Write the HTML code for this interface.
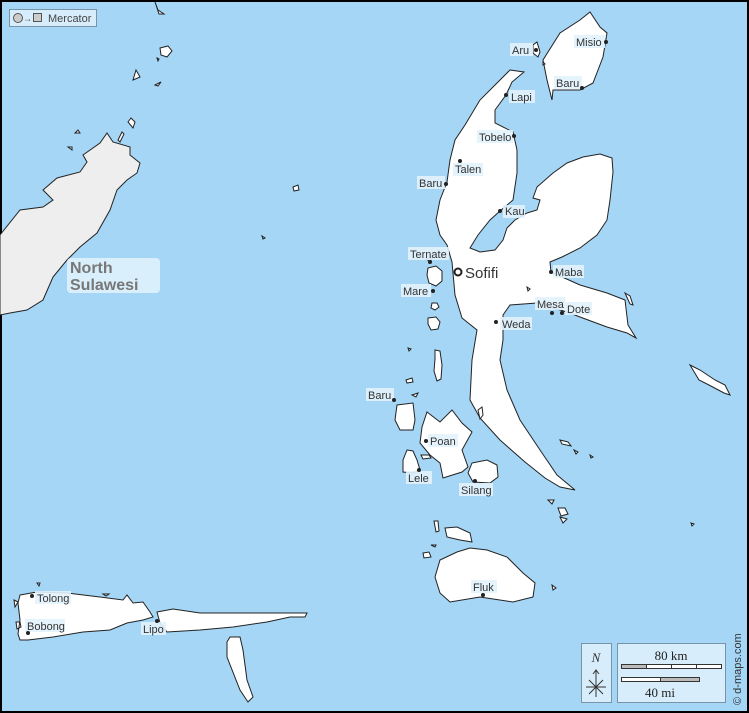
<!DOCTYPE html>
<html><head><meta charset="utf-8"><style>
html,body{margin:0;padding:0;background:#000}
svg{display:block}
.l{font-family:"Liberation Sans",sans-serif;font-size:11px;fill:#333}
.b{fill:#e2f2fc;opacity:.9}
.land{fill:#fff;stroke:#222;stroke-width:1}
</style></head><body>
<svg width="749" height="713" viewBox="0 0 749 713" xmlns="http://www.w3.org/2000/svg">
<rect x="0" y="0" width="749" height="713" fill="#000"/>
<rect x="2" y="2" width="745" height="709" fill="#a5d6f6"/>
<!-- Sulawesi -->
<path fill="#eee" stroke="#222" stroke-width="1" d="M0,235 L20,210 43,207 53,200 43,190 57,178 80,172 87,162 83,155 100,143 107,133 113,142 130,147 130,155 140,163 137,173 127,180 117,190 110,210 97,233 80,247 67,260 53,277 43,300 27,310 10,313 0,315Z"/>
<path class="land" d="M133,80 L140,77 136,70Z M118,140 l4,-8 2,2 -4,8z M128,122 l3,-4 4,4 -2,6z M75,133 l3,-3 2,3z M68,147 l4,0 0,3z M155,2 l3,8 6,4 -5,0z M160,48 l8,-2 4,5 -5,6 -6,-2z M157,58 l2,1 -1,2z M155,85 l6,-3 -3,4z M293,187 l5,-2 1,5 -5,1z M262,236 l3,2 -2,1z"/>
<!-- Halmahera -->
<path class="land" d="M510,70 L524,72 512,82 506,95 495,110 495,123 513,132 517,150 517,173 513,200 500,211 490,220 478,235 470,248 480,252 495,250 503,240 507,228 515,220 527,213 537,210 540,200 533,198 537,187 553,173 567,163 583,157 600,154 612,158 613,172 610,200 607,220 597,235 580,248 562,257 550,262 551,272 580,285 607,293 625,300 628,325 636,338 627,333 607,327 580,317 567,312 537,303 510,305 503,315 503,340 500,360 507,390 520,420 540,450 557,475 575,490 560,487 545,478 525,462 500,440 480,418 470,400 472,360 477,330 462,318 455,295 452,262 447,245 440,235 436,220 440,200 447,182 450,160 455,140 465,125 480,100Z"/>
<!-- Morotai -->
<path class="land" d="M590,12 L600,27 607,33 603,57 593,83 580,90 553,90 552,100 547,80 543,60 560,33 580,20Z"/>
<path class="land" d="M533,45 l4,-3 3,10 -2,5 -5,-4z M543,62 l2,2 -2,1z"/>
<!-- Ternate group -->
<path class="land" d="M428,268 l8,-2 6,5 0,10 -6,5 -7,-3 -2,-8z M426,259 l5,-1 0,4z M432,303 l5,0 2,4 -4,3 -4,-2z M428,318 l8,-1 4,5 -2,7 -7,1 -3,-6z M435,350 l5,1 2,14 -1,14 -4,2 -3,-10 1,-12z M408,348 l3,1 -2,2z M406,380 l6,-2 1,4 -6,1z M412,395 l6,-2 -2,4z M403,410 l4,-3 3,2 -2,6 -5,2z M527,287 l3,2 -2,2z M625,293 l5,3 3,9 -3,-1z M690,365 l10,5 15,10 10,5 5,10 -6,-2 -15,-8 -10,-5z M560,440 l8,2 3,4 -9,-2z M574,450 l4,2 -2,2z M590,455 l3,2 -2,1z M548,500 l6,0 -2,4z M558,508 l7,0 3,6 -7,2z M560,517 l7,2 -4,4z M691,523 l3,1 -2,2z"/>
<!-- Bacan -->
<path class="land" d="M397,405 L413,403 415,420 413,430 400,430 395,420Z M427,412 L440,422 452,410 462,423 472,432 462,450 468,467 462,472 443,478 440,463 430,455 420,443 422,427Z M472,463 L487,460 497,465 498,477 490,483 473,482 468,473Z M407,450 L413,451 417,460 420,470 413,473 403,472 403,460Z M421,455 l8,0 2,3 -8,1z M478,410 l4,-3 1,8 -3,4z"/>
<!-- Obi -->
<path class="land" d="M457,552 L470,548 487,550 507,557 523,573 535,583 533,597 513,602 480,597 450,602 440,593 435,577 440,560Z M445,528 L457,527 470,533 472,542 460,540 447,537Z M434,521 l4,0 1,10 -3,1z M423,553 l6,-1 2,5 -7,1z M431,545 l5,0 -1,2z M552,585 l4,3 -3,2z"/>
<!-- Sula -->
<path class="land" d="M20,595 L37,592 67,593 100,597 123,600 127,595 133,603 143,602 150,612 153,617 143,620 127,623 110,630 83,632 53,637 28,640 20,640 18,634 20,620 18,603Z M157,612 L173,609 200,613 233,613 287,613 307,613 305,617 290,617 267,622 233,627 200,630 167,632 160,623Z M230,637 L240,637 243,650 247,680 253,697 248,702 240,690 227,657 227,642Z M14,600 l4,2 -3,5z M16,622 l4,0 1,5 -4,2z M37,583 l3,0 -1,3z M103,594 l6,0 -3,2z"/>
<!-- Mercator box -->
<rect x="9.5" y="9.5" width="87" height="17" fill="#d7edfb" stroke="#7894a8"/>
<circle cx="18" cy="18" r="4.5" fill="#ccc" stroke="#555"/>
<text x="23" y="21.5" font-family="Liberation Sans,sans-serif" font-size="9" fill="#555">→</text>
<rect x="33.5" y="13.5" width="8" height="8" fill="#ccc" stroke="#555"/>
<text x="48" y="22" font-family="Liberation Sans,sans-serif" font-size="11" fill="#444">Mercator</text>
<!-- North Sulawesi label -->
<rect x="67" y="258" width="93" height="35" rx="4" fill="#e2f3fd" opacity=".85"/>
<text x="70" y="273" font-family="Liberation Sans,sans-serif" font-size="16" font-weight="bold" fill="#777">North</text>
<text x="70" y="290" font-family="Liberation Sans,sans-serif" font-size="16" font-weight="bold" fill="#777">Sulawesi</text>
<!-- labels -->
<g>
<rect class="b" x="510" y="43" width="23" height="13"/><text class="l" x="512" y="54">Aru</text>
<rect class="b" x="574" y="35" width="31" height="13"/><text class="l" x="576" y="46">Misio</text>
<rect class="b" x="554" y="76" width="28" height="13"/><text class="l" x="556" y="87">Baru</text>
<rect class="b" x="509" y="90" width="26" height="13"/><text class="l" x="511" y="101">Lapi</text>
<rect class="b" x="477" y="130" width="36" height="13"/><text class="l" x="479" y="141">Tobelo</text>
<rect class="b" x="453" y="163" width="30" height="13"/><text class="l" x="455" y="173">Talen</text>
<rect class="b" x="417" y="176" width="28" height="13"/><text class="l" x="419" y="187">Baru</text>
<rect class="b" x="503" y="205" width="22" height="13"/><text class="l" x="505" y="215">Kau</text>
<rect class="b" x="408" y="247" width="41" height="13"/><text class="l" x="410" y="258">Ternate</text>
<rect class="b" x="553" y="265" width="31" height="13"/><text class="l" x="555" y="276">Maba</text>
<rect class="b" x="401" y="284" width="30" height="13"/><text class="l" x="403" y="295">Mare</text>
<rect class="b" x="535" y="297" width="30" height="13"/><text class="l" x="537" y="308">Mesa</text>
<rect class="b" x="565" y="302" width="27" height="13"/><text class="l" x="567" y="313">Dote</text>
<rect class="b" x="500" y="317" width="32" height="13"/><text class="l" x="502" y="328">Weda</text>
<rect class="b" x="366" y="388" width="28" height="13"/><text class="l" x="368" y="399">Baru</text>
<rect class="b" x="428" y="434" width="30" height="13"/><text class="l" x="430" y="445">Poan</text>
<rect class="b" x="406" y="471" width="26" height="13"/><text class="l" x="408" y="482">Lele</text>
<rect class="b" x="459" y="483" width="34" height="13"/><text class="l" x="461" y="494">Silang</text>
<rect class="b" x="471" y="580" width="26" height="13"/><text class="l" x="473" y="591">Fluk</text>
<rect class="b" x="35" y="591" width="36" height="13"/><text class="l" x="37" y="602">Tolong</text>
<rect class="b" x="25" y="619" width="40" height="13"/><text class="l" x="27" y="630">Bobong</text>
<rect class="b" x="141" y="622" width="25" height="13"/><text class="l" x="143" y="633">Lipo</text>
</g>
<g fill="#222">
<circle cx="536" cy="50" r="2"/><circle cx="606" cy="42" r="2"/><circle cx="582" cy="88" r="2"/><circle cx="506" cy="95" r="2"/>
<circle cx="514" cy="136" r="2"/><circle cx="460" cy="161" r="2"/><circle cx="446" cy="184" r="2"/><circle cx="500" cy="211" r="2"/>
<circle cx="430" cy="262" r="2"/><circle cx="551" cy="272" r="2"/><circle cx="433" cy="291" r="2"/><circle cx="552" cy="313" r="2"/>
<circle cx="562" cy="313" r="2"/><circle cx="496" cy="322" r="2"/><circle cx="394" cy="400" r="2"/><circle cx="426" cy="441" r="2"/>
<circle cx="419" cy="470" r="2"/><circle cx="475" cy="481" r="2"/><circle cx="483" cy="595" r="2"/><circle cx="32" cy="596" r="2"/>
<circle cx="28" cy="633" r="2"/><circle cx="157" cy="621" r="2"/>
</g>
<circle cx="458" cy="272" r="3.5" fill="#fff" stroke="#222" stroke-width="2"/>
<text x="465" y="278" font-family="Liberation Sans,sans-serif" font-size="15" fill="#333">Sofifi</text>
<!-- compass/scale -->
<rect x="581.5" y="643.5" width="30" height="59" fill="#d7edfb" stroke="#7894a8"/>
<text x="596" y="662" text-anchor="middle" font-family="Liberation Serif,serif" font-style="italic" font-size="13" fill="#333">N</text>
<path d="M596,670 V697 M586,687 H606 M589,680 L603,694 M603,680 L589,694 M593,674 L596,670 599,674" stroke="#333" fill="none" stroke-width="1"/>
<rect x="617.5" y="643.5" width="108" height="59" fill="#d7edfb" stroke="#7894a8"/>
<text x="671" y="660" text-anchor="middle" font-family="Liberation Serif,serif" font-size="13" fill="#222">80 km</text>
<rect x="621.5" y="664.5" width="100" height="4" fill="#fff" stroke="#333"/>
<rect x="621.5" y="664.5" width="25" height="4" fill="#bbb" stroke="#333"/>
<rect x="671.5" y="664.5" width="25" height="4" fill="#fff" stroke="#333"/>
<rect x="621.5" y="677.5" width="78" height="4" fill="#bbb" stroke="#333"/>
<rect x="621.5" y="677.5" width="39" height="4" fill="#fff" stroke="#333"/>
<text x="660" y="697" text-anchor="middle" font-family="Liberation Serif,serif" font-size="13" fill="#222">40 mi</text>
<text transform="translate(741,705) rotate(-90)" font-family="Liberation Sans,sans-serif" font-size="11" fill="#333">© d-maps.com</text>
</svg>
</body></html>
